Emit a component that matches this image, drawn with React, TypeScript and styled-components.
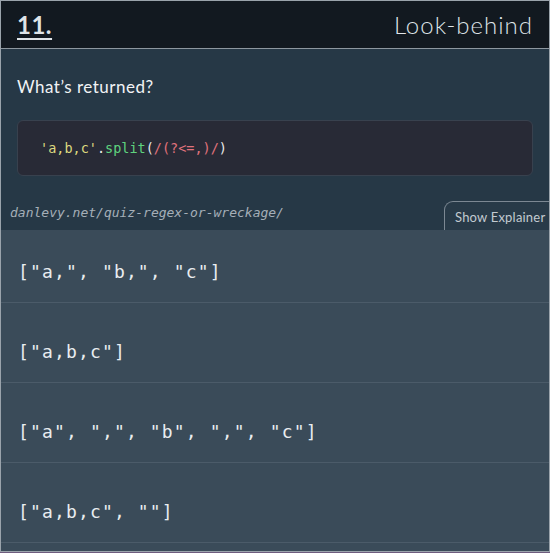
import React from "react";
import styled, { createGlobalStyle } from "styled-components";

const Global = createGlobalStyle`
  html, body { margin: 0; padding: 0; background: #6e5c7e; }
  #root { width: 550px; }
`;

const Card = styled.div`
  box-sizing: border-box;
  width: 550px;
  height: 552px;
  border: 1px solid #9aa3ab;
  display: flex;
  flex-direction: column;
  overflow: hidden;
  background: #3a4b59;
  font-family: Lato, "Open Sans", sans-serif;
`;

const Header = styled.header`
  height: 47px;
  flex: none;
  display: flex;
  align-items: center;
  justify-content: space-between;
  padding: 0 16px;
  background: #121920;
  border-bottom: 1px solid #8d979f;
  color: #dfe4e8;
`;

const Number = styled.a`
  font-size: 24px;
  font-weight: 700;
  letter-spacing: 0.5px;
  color: #dfe4e8;
  text-decoration: underline;
  text-decoration-thickness: 2px;
  text-underline-offset: 4px;
`;

const Topic = styled.h1`
  margin: 0;
  font-size: 24px;
  font-weight: 300;
  letter-spacing: 1px;
  color: #dfe4e8;
`;

const Question = styled.section`
  background: #263846;
  padding: 26px 16px 0;
  display: flex;
  flex-direction: column;
`;

const Prompt = styled.h2`
  margin: 0;
  font-size: 17px;
  line-height: 24px;
  font-weight: 400;
  letter-spacing: 0.5px;
  color: #f1f3f5;
`;

const CodeBlock = styled.pre`
  margin: 21px 0 0;
  height: 56px;
  box-sizing: border-box;
  display: flex;
  align-items: center;
  padding: 0 22px;
  background: #282a36;
  border: 1px solid #38414e;
  border-radius: 6px;
  font-family: "DejaVu Sans Mono", monospace;
  font-size: 13.5px;
  color: #e8e8e8;
`;

const Tok = styled.span<{ $c: string }>`
  color: ${(p) => p.$c};
`;

const Footer = styled.div`
  background: #263846;
  padding-top: 25px;
  display: flex;
  justify-content: space-between;
  align-items: flex-start;
  padding-left: 9px;
`;

const Url = styled.span`
  font-family: "DejaVu Sans Mono", monospace;
  font-style: italic;
  font-size: 13px;
  line-height: 18px;
  margin-top: 3px;
  color: #a5afb8;
`;

const Tab = styled.button`
  box-sizing: border-box;
  width: 107px;
  height: 29px;
  margin-right: -2px;
  padding: 1px 0 0 10px;
  text-align: left;
  background: #283a48;
  border: 1px solid #7c8893;
  border-right: none;
  border-bottom: none;
  border-top-left-radius: 9px;
  font-family: Lato, "Open Sans", sans-serif;
  font-size: 13px;
  letter-spacing: 0.2px;
  color: #c2cad1;
`;

const Options = styled.ul`
  margin: 0;
  padding: 0;
  list-style: none;
  flex: 1;
  background: #3a4b59;
`;

const Option = styled.li<{ $first?: boolean }>`
  padding: ${(p) => (p.$first ? "31px" : "38px")} 18px 19px 17px;
  border-bottom: 1px solid #4b5b69;
  font-family: "DejaVu Sans Mono", monospace;
  font-size: 18px;
  line-height: 22px;
  letter-spacing: 1.15px;
  color: #e9edf0;
  white-space: pre;
`;

const answers = [
  `["a,", "b,", "c"]`,
  `["a,b,c"]`,
  `["a", ",", "b", ",", "c"]`,
  `["a,b,c", ""]`,
];

export default function App() {
  return (
    <>
      <Global />
      <Card>
        <Header>
          <Number>11.</Number>
          <Topic>Look-behind</Topic>
        </Header>
        <Question>
          <Prompt>What’s returned?</Prompt>
          <CodeBlock>
            <Tok $c="#dcd97f">'a,b,c'</Tok>
            <Tok $c="#e8e8e8">.</Tok>
            <Tok $c="#5fd27e">split</Tok>
            <Tok $c="#e8e8e8">(</Tok>
            <Tok $c="#e0727c">/(?&lt;=,)/</Tok>
            <Tok $c="#e8e8e8">)</Tok>
          </CodeBlock>
        </Question>
        <Footer>
          <Url>danlevy.net/quiz-regex-or-wreckage/</Url>
          <Tab>Show Explainer</Tab>
        </Footer>
        <Options>
          {answers.map((a, i) => (
            <Option key={i} $first={i === 0}>
              {a}
            </Option>
          ))}
        </Options>
      </Card>
    </>
  );
}
